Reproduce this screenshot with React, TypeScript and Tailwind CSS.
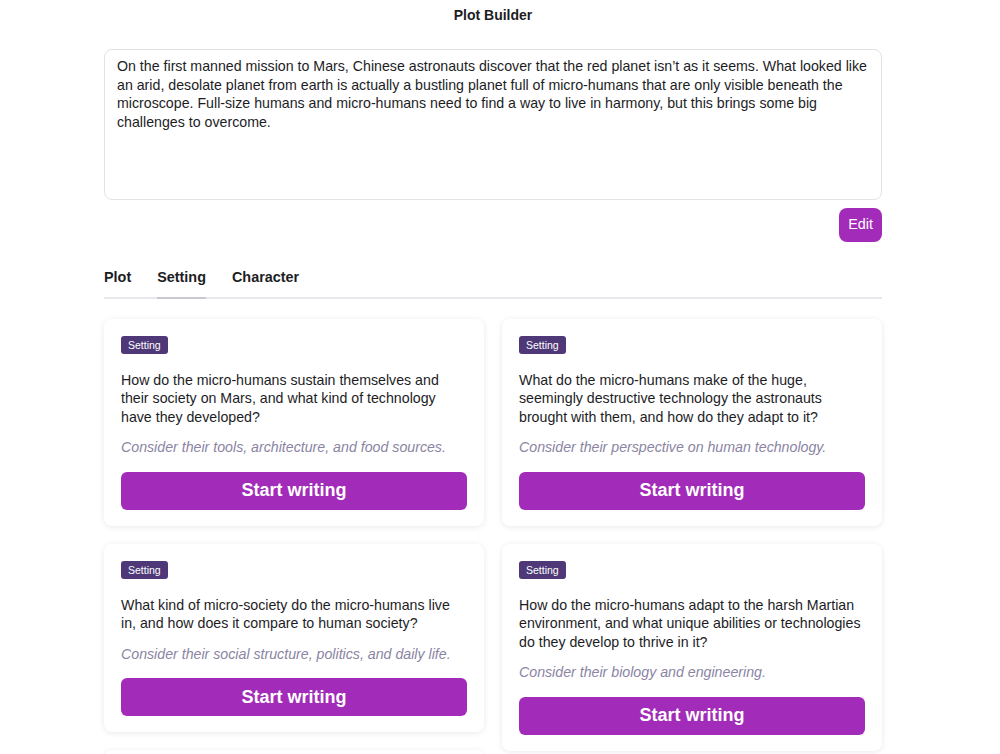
import React, { useState } from 'react';

const PREMISE =
  'On the first manned mission to Mars, Chinese astronauts discover that the red planet isn\u2019t as it seems. What looked like an arid, desolate planet from earth is actually a bustling planet full of micro-humans that are only visible beneath the microscope. Full-size humans and micro-humans need to find a way to live in harmony, but this brings some big challenges to overcome.';

type Prompt = { question: string; hint: string };

const LEFT: Prompt[] = [
  {
    question:
      'How do the micro-humans sustain themselves and their society on Mars, and what kind of technology have they developed?',
    hint: 'Consider their tools, architecture, and food sources.',
  },
  {
    question: 'What kind of micro-society do the micro-humans live in, and how does it compare to human society?',
    hint: 'Consider their social structure, politics, and daily life.',
  },
  {
    question: 'Where on Mars do the micro-humans build their largest cities, and why?',
    hint: 'Consider geography, climate, and resources.',
  },
];

const RIGHT: Prompt[] = [
  {
    question:
      'What do the micro-humans make of the huge, seemingly destructive technology the astronauts brought with them, and how do they adapt to it?',
    hint: 'Consider their perspective on human technology.',
  },
  {
    question:
      'How do the micro-humans adapt to the harsh Martian environment, and what unique abilities or technologies do they develop to thrive in it?',
    hint: 'Consider their biology and engineering.',
  },
  {
    question: 'What landmarks on Mars hold special meaning for the micro-humans?',
    hint: 'Consider their history and beliefs.',
  },
];

const PromptCard = ({ p }: { p: Prompt }) => (
  <div className="bg-white rounded-lg shadow-[0_1px_6px_rgba(0,0,0,0.09)] pt-[17px] pb-[16px] px-[17px]">
    <div className="w-fit bg-[#4e3877] text-white text-[10.5px] leading-[18px] px-[7px] rounded-[3px]">Setting</div>
    <p className="mt-[17px] text-[14.2px] leading-[18.5px] text-[#1d1d1f]">{p.question}</p>
    <p className="mt-[12px] text-[14.2px] leading-[18.5px] italic text-[#8a84a3]">{p.hint}</p>
    <button className="mt-[15px] w-full h-[38px] rounded-md bg-[#a22bb9] text-white text-[18px] font-bold">
      Start writing
    </button>
  </div>
);

export default function App() {
  const [tab, setTab] = useState('Setting');
  return (
    <div className="min-h-screen bg-white font-['Liberation_Sans',Arial,sans-serif] text-[#1d1d1f]">
      <div className="w-[778px] ml-[104px]">
        <h1 className="pt-[6px] text-center text-[14px] leading-[18px] font-bold">Plot Builder</h1>

        <div className="mt-[25px] h-[151px] border border-[#e3e3e6] rounded-lg pl-[12px] pr-[4px] pt-[7px] text-[14.2px] leading-[18.5px]">
          {PREMISE}
        </div>

        <div className="flex justify-end mt-[8px]">
          <button className="h-[34px] px-[9px] rounded-lg bg-[#a22bb9] text-white text-[14.4px]">Edit</button>
        </div>

        <div className="mt-[25px] flex gap-[26px] border-b-2 border-[#e8e8ec] text-[14.4px] font-bold">
          {['Plot', 'Setting', 'Character'].map((t) => (
            <button
              key={t}
              onClick={() => setTab(t)}
              className={
                tab === t
                  ? 'pb-[8px] -mb-[2px] border-b-2 border-[#c9c9cf]'
                  : 'pb-[8px] -mb-[2px] border-b-2 border-transparent'
              }
            >
              {t}
            </button>
          ))}
        </div>

        <div className="mt-[20px] flex gap-[18px] items-start">
          <div className="flex-1 flex flex-col gap-[18px]">
            {LEFT.map((p, i) => (
              <PromptCard key={i} p={p} />
            ))}
          </div>
          <div className="flex-1 flex flex-col gap-[18px]">
            {RIGHT.map((p, i) => (
              <PromptCard key={i} p={p} />
            ))}
          </div>
        </div>
      </div>
    </div>
  );
}
